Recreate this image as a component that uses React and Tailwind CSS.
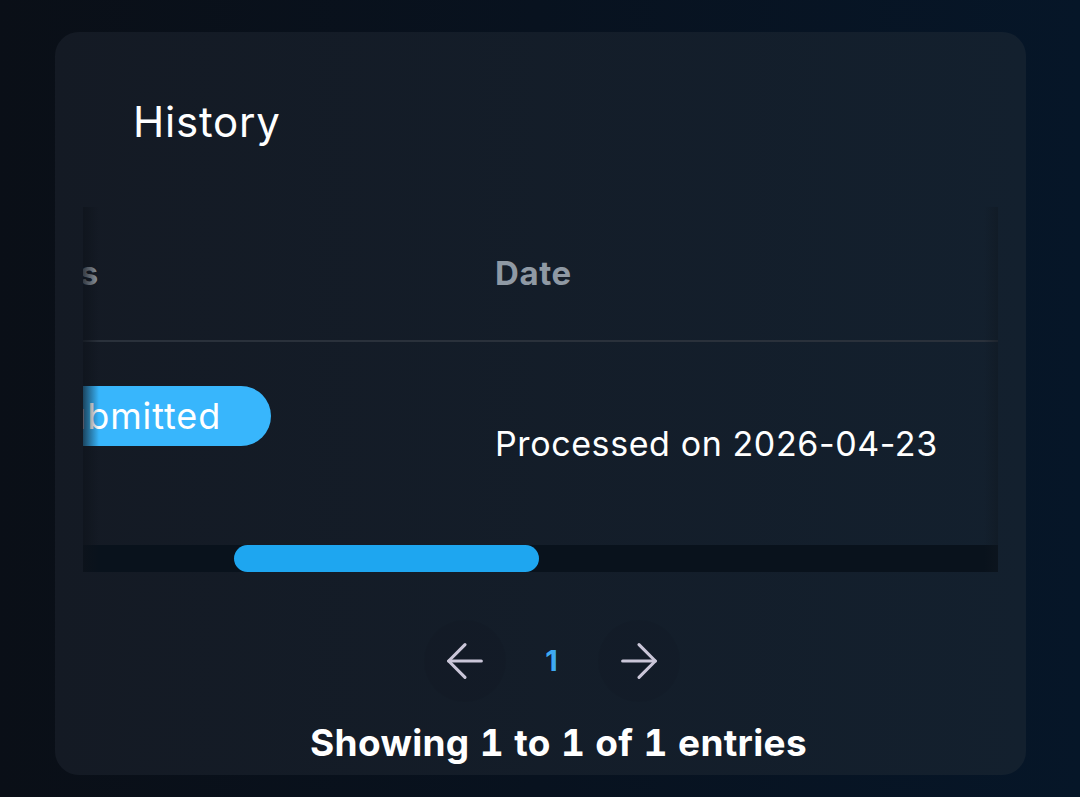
import React from 'react';

const ArrowLeft = () => (
  <svg width="56" height="56" viewBox="0 0 24 24" fill="none" stroke="currentColor" strokeWidth="1.35" strokeLinecap="round" strokeLinejoin="round">
    <path d="M19 12H5" />
    <path d="M12 19l-7-7 7-7" />
  </svg>
);

const ArrowRight = () => (
  <svg width="56" height="56" viewBox="0 0 24 24" fill="none" stroke="currentColor" strokeWidth="1.35" strokeLinecap="round" strokeLinejoin="round">
    <path d="M5 12h14" />
    <path d="M12 5l7 7-7 7" />
  </svg>
);

const App = () => {
  return (
    <div
      className="min-h-[797px] w-full bg-gradient-to-r from-[#0a0f17] via-[#08121f] to-[#061628] pl-[55px] pt-[32px]"
      style={{ fontFamily: 'Inter, "Noto Sans", sans-serif' }}
    >
      <div className="w-[971px] h-[743px] rounded-[24px] bg-gradient-to-r from-[#141a24] to-[#13202e] overflow-hidden flex flex-col">
        <h1 className="pl-[78px] pt-[69px] text-[42px] leading-none font-normal text-white tracking-[0.8px]">
          History
        </h1>

        <div className="mx-[28px] mt-[64px] relative">
          <div className="overflow-hidden">
            {/* header */}
            <div className="flex h-[135px] items-center border-b-2 border-[#2a313b]">
              <div className="w-[412px] overflow-hidden">
                <span className="block -ml-[92px] text-[33px] font-bold tracking-[0.6px] text-[#8f99a4]">Status</span>
              </div>
              <div className="text-[33px] font-bold tracking-[0.6px] text-[#8f99a4]">Date</div>
            </div>
            {/* row */}
            <div className="flex h-[203px]">
              <div className="w-[412px] overflow-hidden pt-[44px]">
                <span className="-ml-[56px] inline-flex h-[60px] items-center rounded-full bg-[#38b6fc] pl-[14px] pr-[50px] text-[36px] tracking-[0.9px] text-white">
                  Submitted
                </span>
              </div>
              <div className="flex items-center text-[34px] tracking-[0.6px] text-white">Processed on 2026-04-23</div>
            </div>
          </div>
          {/* edge shading */}
          <div className="pointer-events-none absolute left-0 top-0 bottom-0 w-[16px] bg-gradient-to-r from-[#0e131b]/70 to-transparent" />
          <div className="pointer-events-none absolute right-0 top-0 bottom-0 w-[14px] bg-gradient-to-l from-[#0f1720]/50 to-transparent" />
          {/* scrollbar */}
          <div className="h-[27px] bg-[#09121c]">
            <div className="ml-[151px] h-[27px] w-[305px] rounded-full bg-[#1ea6f0]" />
          </div>
        </div>

        <div className="mt-[48px] flex items-center justify-center gap-[6px] pl-[22px]">
          <button className="flex h-[82px] w-[82px] items-center justify-center rounded-full bg-black/[0.04] text-[#cac6d8]">
            <ArrowLeft />
          </button>
          <span className="flex h-[82px] w-[80px] items-center justify-center text-[29px] font-bold text-[#3ea9f2]">1</span>
          <button className="flex h-[82px] w-[82px] items-center justify-center rounded-full bg-black/[0.04] text-[#cac6d8]">
            <ArrowRight />
          </button>
        </div>

        <p className="mt-[22px] pl-[36px] text-center text-[37px] font-bold leading-none tracking-[0.3px] tabular-nums text-white">
          Showing 1 to 1 of 1 entries
        </p>
      </div>
    </div>
  );
};

export default App;
